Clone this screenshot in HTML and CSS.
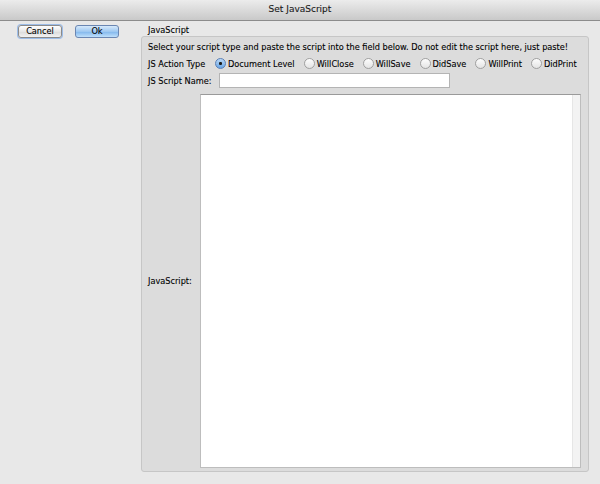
FILE: index.html
```html
<!DOCTYPE html>
<html>
<head>
<meta charset="utf-8">
<link rel="stylesheet" href="styles.css">
</head>
<body>
<div class="titlebar">Set JavaScript</div>
<div class="main">
  <div class="actions">
    <button class="btn">Cancel</button>
    <button class="btn btn-default">Ok</button>
  </div>
  <div class="section">
    <div class="section-title">JavaScript</div>
    <div class="group">
      <div class="row intro">Select your script type and paste the script into the field below. Do not edit the script here, just paste!</div>
      <div class="row">
        <span class="label">JS Action Type</span>
        <span class="radios">
          <span class="radio-item"><span class="radio checked"></span>Document Level</span>
          <span class="radio-item"><span class="radio"></span>WillClose</span>
          <span class="radio-item"><span class="radio"></span>WillSave</span>
          <span class="radio-item"><span class="radio"></span>DidSave</span>
          <span class="radio-item"><span class="radio"></span>WillPrint</span>
          <span class="radio-item"><span class="radio"></span>DidPrint</span>
        </span>
      </div>
      <div class="row">
        <span class="label name-label">JS Script Name:</span>
        <span class="input"></span>
      </div>
      <div class="editor">
        <div class="editor-label">JavaScript:</div>
        <div class="textarea"><div class="track"></div></div>
      </div>
    </div>
  </div>
</div>
</body>
</html>
```
FILE: styles.css
```css
html, body {
  margin: 0;
  padding: 0;
}
body {
  width: 600px;
  height: 484px;
  background: #e8e8e8;
  font-family: "DejaVu Sans", sans-serif;
  font-size: 8.2px;
  color: #000;
  -webkit-text-stroke: 0.1px #000;
  overflow: hidden;
}
.titlebar {
  height: 21px;
  line-height: 19px;
  text-align: center;
  font-size: 9px;
  color: #222;
  background: linear-gradient(#ececec, #c9c9c9);
  border-bottom: 1px solid #8c8c8c;
  box-sizing: border-box;
}
.main {
  display: flex;
  height: 463px;
}
.actions {
  width: 141px;
  display: flex;
  gap: 13px;
  padding: 4px 0 0 18px;
  box-sizing: border-box;
  align-items: flex-start;
}
.btn {
  width: 44px;
  height: 13px;
  padding: 0;
  margin: 0;
  font-family: inherit;
  font-size: 8.2px;
  line-height: 11px;
  color: #000;
  border: 1px solid #8a8a8a;
  border-radius: 3px;
  background: linear-gradient(#ffffff, #e6e6e6 50%, #dadada 51%, #f2f2f2);
  box-shadow: 0 0 0 1px #9dbde8;
}
.btn-default {
  box-shadow: none;
  border-color: #6a86b2;
  background: linear-gradient(#d6e9fb, #9ec8f1 50%, #7fb5ec 51%, #bfe0fb);
}
.section {
  width: 448px;
  display: flex;
  flex-direction: column;
}
.section-title {
  height: 15px;
  line-height: 15px;
  padding: 2px 0 0 7px;
  box-sizing: border-box;
}
.group {
  flex: 1;
  margin-bottom: 12px;
  background: #dcdcdc;
  border: 1px solid #c6c6c6;
  border-radius: 3px;
  display: flex;
  flex-direction: column;
  padding: 2px 7px 3px 0;
  box-sizing: border-box;
}
.row {
  height: 17px;
  display: flex;
  align-items: center;
  padding-left: 6px;
  white-space: nowrap;
}
.intro {
  height: 16px;
}
.label {
  width: 67px;
  flex-shrink: 0;
}
.name-label {
  width: 71px;
}
.radios {
  display: flex;
  flex-shrink: 0;
}
.radio-item {
  display: flex;
  align-items: center;
  margin-right: 9px;
}
.radio {
  width: 11px;
  height: 11px;
  border-radius: 50%;
  border: 1px solid #a0a0a0;
  background: linear-gradient(#fdfdfd, #e4e4e4);
  margin-right: 2px;
  box-sizing: border-box;
}
.radio.checked {
  border-color: #5a7fb5;
  background: radial-gradient(circle, #1b1b1b 0 1.3px, transparent 1.7px), linear-gradient(#b9d8f6, #6aa6e6);
}
.input {
  width: 231px;
  height: 15px;
  background: #fff;
  border: 1px solid #b4b4b4;
  box-sizing: border-box;
}
.editor {
  flex: 1;
  display: flex;
  margin-top: 5px;
}
.editor-label {
  width: 58px;
  padding-left: 6px;
  box-sizing: border-box;
  display: flex;
  align-items: center;
}
.textarea {
  flex: 1;
  background: #fff;
  border: 1px solid #bdbdbd;
  border-top-color: #9a9a9a;
  display: flex;
  justify-content: flex-end;
}
.track {
  width: 7px;
  background: #f3f3f3;
  border-left: 1px solid #e6e6e6;
}
```
